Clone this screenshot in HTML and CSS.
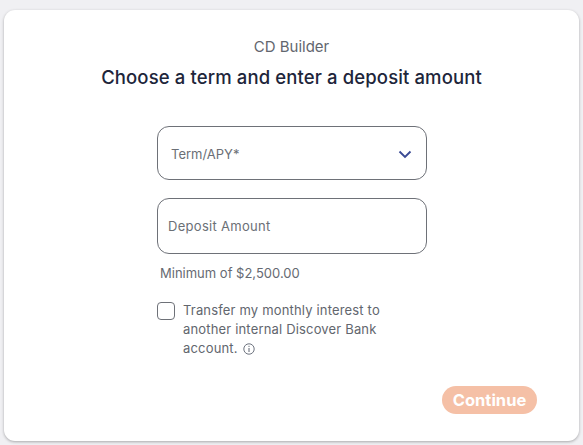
FILE: index.html
```html
<!DOCTYPE html>
<html lang="en">

<head>
     <meta charset="UTF-8">
     <meta name="viewport" content="width=device-width, initial-scale=1.0">
     <title>CD Builder</title>
     <link rel="stylesheet" href="styles.css">
</head>

<body>

     <div class="card">
          <p class="eyebrow">CD Builder</p>
          <h1 class="title">Choose a term and enter a deposit amount</h1>

          <div class="form">
               <div class="field field_select">
                    <span class="field_label">Term/APY*</span>
                    <svg class="chevron" width="14" height="9" viewBox="0 0 14 9">
                         <path d="M1.5 1.5 L7 7 L12.5 1.5" fill="none" stroke="#3a4a94" stroke-width="1.9" />
                    </svg>
               </div>
               <div class="field field_amount">
                    <span class="field_label field_label_wide">Deposit Amount</span>
               </div>
               <p class="hint">Minimum of $2,500.00</p>
               <div class="check_row">
                    <span class="check_box"></span>
                    <p class="check_text">Transfer my monthly interest to another internal Discover Bank account.
                         <svg class="info" width="12" height="12" viewBox="0 0 12 12">
                              <circle cx="6" cy="6" r="5.2" fill="none" stroke="#5c6370" stroke-width="0.9" />
                              <path d="M6 5 V9 M6 2.8 V3.9" stroke="#5c6370" stroke-width="1" />
                         </svg>
                    </p>
               </div>
          </div>

          <div class="actions">
               <button class="continue">Continue</button>
          </div>
     </div>

</body>

</html>
```

FILE: styles.css
```css
* {
     box-sizing: border-box;
}

body {
     margin: 0;
     height: 445px;
     padding: 10px 4px 4px;
     background-color: #f0f0f3;
     font-family: "Inter", "Liberation Sans", sans-serif;
     overflow: hidden;
}

.card {
     height: 431px;
     padding: 28px 42px 0;
     background-color: #fff;
     border-radius: 11px;
     box-shadow: 0 1px 3px rgba(0, 0, 0, 0.3);
}

.eyebrow {
     margin: 0;
     text-align: center;
     font-size: 15px;
     line-height: 17px;
     color: #62666e;
}

.title {
     margin: 11px 0 0;
     text-align: center;
     font-size: 18.5px;
     line-height: 22px;
     font-weight: 500;
     letter-spacing: 0.12px;
     color: #20253a;
}

.form {
     width: 270px;
     margin: 38px auto 0 111px;
}

.field {
     display: flex;
     align-items: center;
     justify-content: space-between;
     border: 1px solid #6e7178;
     border-radius: 12px;
}

.field_select {
     height: 54px;
     padding: 2px 14px 0 13px;
}

.field_amount {
     height: 56px;
     margin-top: 18px;
     padding: 0 10px;
}

.field_label {
     font-size: 13px;
     color: #6b6f76;
}

.field_label_wide {
     letter-spacing: 0.3px;
}

.hint {
     margin: 11px 0 0 3px;
     font-size: 13px;
     line-height: 16px;
     color: #666a72;
}

.check_row {
     display: flex;
     margin-top: 20px;
}

.check_box {
     flex: none;
     width: 18px;
     height: 18px;
     margin-top: 1px;
     border: 1px solid #6e7178;
     border-radius: 4px;
}

.check_text {
     width: 210px;
     margin: 0 0 0 8px;
     font-size: 13px;
     line-height: 19px;
     letter-spacing: 0.17px;
     color: #62666e;
}

.info {
     vertical-align: -2px;
     margin-left: 1px;
}

.actions {
     display: flex;
     justify-content: flex-end;
     margin-top: 28px;
}

.continue {
     width: 95px;
     height: 28px;
     padding: 0;
     border: none;
     border-radius: 14px;
     background-color: #f5c0a6;
     font-family: inherit;
     font-size: 16.5px;
     font-weight: 700;
     color: #fff;
}
```
